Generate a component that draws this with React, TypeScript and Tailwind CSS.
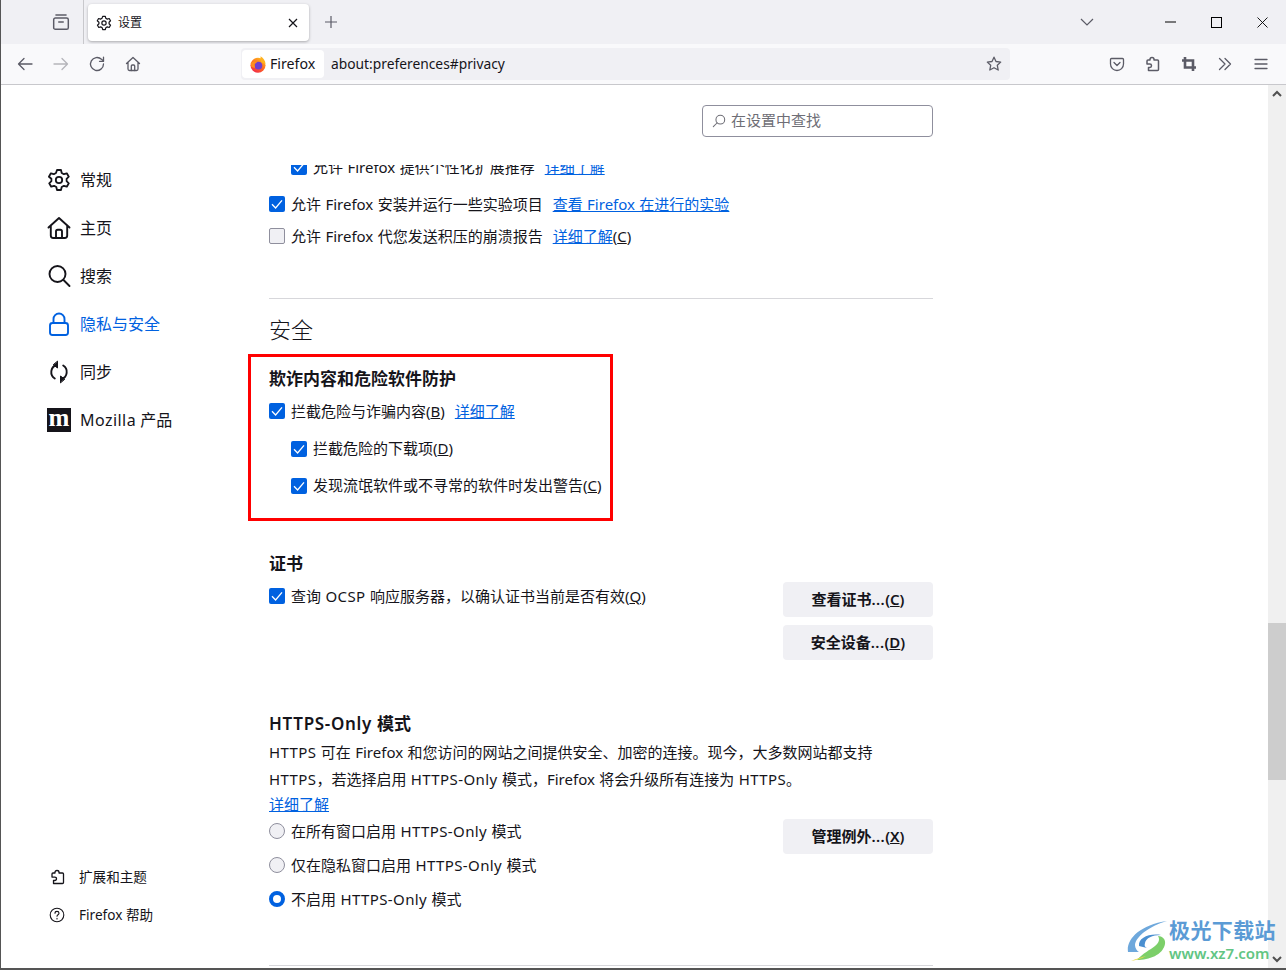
import React from "react";

const FONT = "font-['Noto_Sans','Noto_Sans_CJK_SC',sans-serif]";

function Check({ checked = true }: { checked?: boolean }) {
  if (!checked)
    return <span className="w-[16px] h-[16px] rounded-[2px] border border-[#8f8f9d] bg-[#f0f0f4] shrink-0" />;
  return (
    <span className="w-[16px] h-[16px] rounded-[2px] bg-[#0061e0] shrink-0 flex items-center justify-center">
      <svg width="14" height="14" viewBox="0 0 14 14" fill="none">
        <path d="M2 7.200 L5.600 11 L12 3.400" stroke="#fff" strokeWidth="1.300" />
      </svg>
    </span>
  );
}

function Radio({ checked = false }: { checked?: boolean }) {
  if (checked)
    return <span className="w-[16px] h-[16px] rounded-full border-[4px] border-[#0061e0] bg-white shrink-0" />;
  return <span className="w-[16px] h-[16px] rounded-full border border-[#8f8f9d] bg-[#f0f0f4] shrink-0" />;
}

function A({ children }: { children: React.ReactNode }) {
  return <span className="text-[#0061e0] underline">{children}</span>;
}

function U({ children }: { children: React.ReactNode }) {
  return <span className="underline">{children}</span>;
}

function L({ children }: { children: React.ReactNode }) {
  return <span className="tracking-[0.4px]">{children}</span>;
}

function Btn({ children, className = "" }: { children: React.ReactNode; className?: string }) {
  return (
    <div className={`w-[150px] h-[35px] rounded-[4px] bg-[#f0f0f4] flex items-center justify-center text-[15px] font-semibold text-[#15141a] ${className}`}>
      {children}
    </div>
  );
}

function Row({ children, h, indent }: { children: React.ReactNode; h: string; indent?: boolean }) {
  return <div className={`flex items-center gap-[6px] ${h} ${indent ? "pl-[22px]" : ""}`}>{children}</div>;
}

const stroke = { fill: "none", stroke: "currentColor", strokeWidth: 1.3, strokeLinecap: "round", strokeLinejoin: "round" } as const;

function Gear({ size }: { size: number }) {
  return (
    <svg width={size} height={size} viewBox="0 0 24 24" {...stroke} strokeWidth={1.800}>
      <circle cx="12" cy="12" r="3.200" />
      <path d="M10 2h4l.7 3 2.200 1.200 2.900-.9 2 3.400-2.200 2.100v2.400l2.200 2.100-2 3.400-2.900-.9-2.200 1.200-.7 3h-4l-.7-3-2.200-1.200-2.900.9-2-3.400 2.200-2.100v-2.400L1.900 8.700l2-3.400 2.900.9L9 5z" />
    </svg>
  );
}

function Puzzle({ size, w = 1.500 }: { size: number; w?: number }) {
  return (
    <svg width={size} height={size} viewBox="0 0 16 16" {...stroke} strokeWidth={w}>
      <path d="M7 1.500c1.300 0 2 .8 2 1.800v.7h3.500c.6 0 1 .4 1 1v8.500c0 .6-.4 1-1 1H3.500v-3h1.300c1 0 1.700-.7 1.700-1.700S5.800 8.100 4.800 8.100H2V5c0-.6.4-1 1-1h2v-.7c0-1 .7-1.800 2-1.800z" />
    </svg>
  );
}

function FirefoxLogo() {
  return (
    <svg width="16" height="17" viewBox="0 0 16 17" className="shrink-0">
      <defs>
        <linearGradient id="ff" x1="0.8" y1="0" x2="0.2" y2="1">
          <stop offset="0" stopColor="#ffc11f" />
          <stop offset="0.5" stopColor="#ff6b1f" />
          <stop offset="1" stopColor="#f0254f" />
        </linearGradient>
      </defs>
      <circle cx="8" cy="9.300" r="7.500" fill="url(#ff)" />
      <path d="M10.500 0.300c3 2 5 4.500 5 8L11 6z" fill="#ffb21f" />
      <circle cx="8.400" cy="9.600" r="3.900" fill="#6f3fd0" />
      <path d="M.6 7C3 5 5 5 7 6.500L4.500 8 5 12 1.500 11z" fill="#ff8f1f" />
    </svg>
  );
}

function NavItem({ icon, label, active }: { icon: React.ReactNode; label: React.ReactNode; active?: boolean }) {
  return (
    <div className={`h-[48px] flex items-center text-[16px] ${active ? "text-[#0061e0]" : "text-[#15141a]"}`}>
      <span className="w-[33px] shrink-0 flex items-center">{icon}</span>
      <span>{label}</span>
    </div>
  );
}

export default function App() {
  return (
    <div className={`${FONT} w-[1286px] h-[970px] flex flex-col overflow-hidden bg-white text-[#15141a] border-l border-[#555] border-b-2 border-b-[#555] relative`}>
      {/* Tab strip */}
      <div className="h-[44px] bg-[#f0f0f4] flex items-center shrink-0">
        <div className="w-[83px] h-full border-r border-[#c8c8cc] flex items-center justify-end pr-[13px] text-[#5b5b66]">
          <svg width="18" height="18" viewBox="0 0 16 16" {...stroke}>
            <rect x="1.500" y="4.500" width="13" height="10" rx="1.500" />
            <path d="M3.500 1.800h9M6 8h4" />
          </svg>
        </div>
        <div className="ml-[4px] w-[221px] h-[37px] mt-[1px] bg-white rounded-[4px] shadow-[0_1px_3px_rgba(0,0,0,0.3)] flex items-center pl-[8px] pr-[11px] text-[#15141a]">
          <Gear size={16} />
          <span className="ml-[6px] text-[12px] flex-1">设置</span>
          <svg width="10" height="10" viewBox="0 0 10 10" stroke="#15141a" strokeWidth="1.200"><path d="M1 1l8 8M9 1l-8 8" /></svg>
        </div>
        <div className="ml-[15px] text-[#5b5b66]">
          <svg width="14" height="14" viewBox="0 0 14 14" stroke="currentColor" strokeWidth="1.200"><path d="M7 1v12M1 7h12" /></svg>
        </div>
        <div className="flex-1" />
        <div className="flex items-center text-[#15141a]">
          <svg className="mr-[71px]" width="14" height="8" viewBox="0 0 14 8" fill="none" stroke="#5b5b66" strokeWidth="1.200"><path d="M1 1l6 6 6-6" /></svg>
          <svg className="mr-[35px]" width="11" height="2" viewBox="0 0 11 2" stroke="#000" strokeWidth="1"><path d="M0 1h11" /></svg>
          <svg className="mr-[35px]" width="11" height="11" viewBox="0 0 11 11" fill="none" stroke="#000" strokeWidth="1"><rect x="0.500" y="0.500" width="10" height="10" /></svg>
          <svg className="mr-[18px]" width="11" height="11" viewBox="0 0 11 11" stroke="#000" strokeWidth="0.900"><path d="M0.500 0.500l10 10M10.500 0.500l-10 10" /></svg>
        </div>
      </div>

      {/* Nav bar */}
      <div className="h-[41px] bg-[#f9f9fb] border-b border-[#c8c8cc] flex items-center shrink-0 text-[#5b5b66]">
        <div className="ml-[16px] w-[36px]">
          <svg width="16" height="16" viewBox="0 0 16 16" {...stroke}><path d="M15 8H1.500M7 2.500 1.500 8 7 13.500" /></svg>
        </div>
        <div className="w-[36px] text-[#b5b5ba]">
          <svg width="16" height="16" viewBox="0 0 16 16" {...stroke}><path d="M1 8h13.500M9 2.500 14.500 8 9 13.500" /></svg>
        </div>
        <div className="w-[36px]">
          <svg width="16" height="16" viewBox="0 0 16 16" {...stroke}>
            <path d="M14.500 8a6.500 6.500 0 1 1-2-4.700L14.500 5" />
            <path d="M14.500 1.200V5.300h-4" />
          </svg>
        </div>
        <div className="w-[40px]">
          <svg width="16" height="16" viewBox="0 0 16 16" {...stroke}>
            <path d="M1.500 7.500 8 1.500l6.500 6M3 6.500V13c0 .8.500 1.500 1.500 1.500h7c1 0 1.500-.7 1.500-1.500V6.500" />
            <path d="M6.300 14.500V10c0-.6.400-1 1-1h1.400c.6 0 1 .4 1 1v4.500" />
          </svg>
        </div>
        <div className="ml-[76px] w-[769px] h-[32px] bg-[#f0f0f4] rounded-[4px] flex items-center text-[#15141a] text-[14.200px]">
          <div className="w-[82px] h-[28px] ml-[1px] bg-white rounded-[4px] flex items-center pl-[8px] gap-[4px]">
            <FirefoxLogo />
            <span>Firefox</span>
          </div>
          <span className="ml-[7px] flex-1 text-[13.800px]">about:preferences#privacy</span>
          <svg className="mr-[8px] text-[#5b5b66]" width="16" height="16" viewBox="0 0 16 16" {...stroke}>
            <path d="M8 1.200l2 4.300 4.700.6-3.400 3.200.9 4.700L8 11.700 3.800 14l.9-4.700L1.300 6.100 6 5.500z" />
          </svg>
        </div>
        <div className="flex-1" />
        <div className="flex items-center gap-[20px] pr-[17px]">
          <svg width="16" height="16" viewBox="0 0 16 16" {...stroke}>
            <path d="M2.500 2.500h11c.6 0 1 .4 1 1V8a6.500 6.500 0 0 1-13 0V3.500c0-.6.400-1 1-1z" />
            <path d="M5 6.500 8 9.500l3-3" />
          </svg>
          <Puzzle size={16} />
          <svg width="16" height="16" viewBox="0 0 16 16" fill="none" stroke="currentColor" strokeWidth="2.600"><path d="M4 1v10.500h11M1 4.500h11V15" /></svg>
          <svg width="16" height="16" viewBox="0 0 16 16" {...stroke}><path d="M2.500 2.500 8 8l-5.500 5.500M8 2.500 13.500 8 8 13.500" /></svg>
          <svg width="16" height="16" viewBox="0 0 16 16" {...stroke}><path d="M2 3.500h12M2 8h12M2 12.500h12" /></svg>
        </div>
      </div>

      {/* Body */}
      <div className="flex-1 flex min-h-0">
        {/* Sidebar */}
        <div className="w-[268px] shrink-0 pl-[46px] pt-[71px] flex flex-col">
          <NavItem label="常规" icon={<Gear size={24} />} />
          <NavItem
            label="主页"
            icon={
              <svg width="24" height="24" viewBox="0 0 24 24" {...stroke} strokeWidth={1.900}>
                <path d="M1.500 11.500 12 2l10.500 9.500M3.800 10v9.500c0 1.500 1 2.500 2.500 2.500h11.400c1.500 0 2.500-1 2.500-2.500V10" />
                <path d="M9 22v-6.500c0-1 .7-1.700 1.700-1.700h2.600c1 0 1.700.7 1.700 1.700V22" />
              </svg>
            }
          />
          <NavItem
            label="搜索"
            icon={
              <svg width="24" height="24" viewBox="0 0 24 24" {...stroke} strokeWidth={1.900}>
                <circle cx="10.500" cy="10" r="8" />
                <path d="M16.500 16 22.500 22" />
              </svg>
            }
          />
          <NavItem
            active
            label="隐私与安全"
            icon={
              <svg width="24" height="24" viewBox="0 0 24 24" {...stroke} strokeWidth={1.900}>
                <rect x="3" y="11" width="18" height="12" rx="2.500" />
                <path d="M6.500 11V7a5.500 5.500 0 0 1 11 0v4" />
              </svg>
            }
          />
          <NavItem
            label="同步"
            icon={
              <svg width="24" height="24" viewBox="0 0 24 24" {...stroke} strokeWidth={1.900}>
                <path d="M7.800 18.500A7.500 7.500 0 0 1 9.500 5M16.200 5.500A7.500 7.500 0 0 1 14.500 19" />
                <path d="M10.500 1.500v6.500L6.500 5z M13.500 22.500V16l4 3z" fill="currentColor" strokeWidth={1} />
              </svg>
            }
          />
          <NavItem
            label={<span><span className="tracking-[0.45px]">Mozilla</span> 产品</span>}
            icon={
              <span className="w-[24px] h-[24px] bg-[#15141a] text-white flex items-center justify-center font-['Liberation_Serif',serif] font-bold text-[25px] leading-none pb-[5px]">
                m
              </span>
            }
          />
          <div className="flex-1" />
          <div className="h-[38px] flex items-center text-[13.600px]">
            <span className="w-[32px] pl-[3px] text-[#15141a]"><Puzzle size={16} w={1.300} /></span>
            <span>扩展和主题</span>
          </div>
          <div className="h-[38px] flex items-center text-[13.600px] mb-[34px]">
            <span className="w-[32px] pl-[2px] text-[#15141a]">
              <svg width="16" height="16" viewBox="0 0 16 16" {...stroke} strokeWidth={1.100}>
                <circle cx="8" cy="8" r="6.800" />
                <path d="M6 6.300c0-1.200 1-1.900 2-1.900s2 .7 2 1.800c0 1.500-2 1.500-2 3" />
                <path d="M8 11.300v.6" />
              </svg>
            </span>
            <span>Firefox 帮助</span>
          </div>
        </div>

        {/* Main */}
        <div className="w-[664px] shrink-0 text-[15px] [word-spacing:0.5px]">
          <div className="h-[80px] flex justify-end items-start pt-[20px]">
            <div className="w-[231px] h-[32px] border border-[#8f8f9d] rounded-[4px] flex items-center pl-[9px] pb-[2px] gap-[5px] text-[#6e6e76] text-[15px]">
              <svg className="mt-[2px]" width="14" height="14" viewBox="0 0 16 16" {...stroke} strokeWidth={1.200}>
                <circle cx="9.500" cy="6.500" r="5" />
                <path d="M6 10 1.500 14.500" />
              </svg>
              <span>在设置中查找</span>
            </div>
          </div>
          <div className="h-[11px] overflow-hidden flex items-end">
            <Row indent h="h-[18px] shrink-0">
              <Check />
              <span>允许 Firefox 提供个性化扩展推荐</span>
              <span className="ml-[4px]"><A>详细了解</A></span>
            </Row>
          </div>
          <Row h="h-[28px] mt-[14px]">
            <Check />
            <span>允许 Firefox 安装并运行一些实验项目</span>
            <span className="ml-[4px]"><A>查看 Firefox 在进行的实验</A></span>
          </Row>
          <Row h="h-[36px]">
            <Check checked={false} />
            <span>允许 Firefox 代您发送积压的崩溃报告</span>
            <span className="ml-[4px]"><A>详细了解</A>(<U>C</U>)</span>
          </Row>
          <div className="h-px bg-[#d7d7db] mt-[44px]" />
          <div className="h-[30px] mt-[15px] flex items-center text-[22px] font-light">安全</div>

          <div className="mt-[10px] ml-[-21px] w-[365px] h-[167px] border-[3px] border-[#ff0000] pl-[18px] pt-[10px]">
            <div className="h-[24px] flex items-center text-[17px] font-semibold">欺诈内容和危险软件防护</div>
            <Row h="h-[32px] mt-[4px]">
              <Check />
              <span>拦截危险与诈骗内容(<U>B</U>)</span>
              <span className="ml-[4px]"><A>详细了解</A></span>
            </Row>
            <Row indent h="h-[37px] mt-[3px]">
              <Check />
              <span>拦截危险的下载项(<U>D</U>)</span>
            </Row>
            <Row indent h="h-[37px]">
              <Check />
              <span>发现流氓软件或不寻常的软件时发出警告(<U>C</U>)</span>
            </Row>
          </div>

          <div className="h-[24px] mt-[31px] flex items-center text-[17px] font-semibold">证书</div>
          <div className="flex justify-between mt-[6px]">
            <Row h="h-[28px]">
              <Check />
              <span>查询 <L>OCSP</L> 响应服务器，以确认证书当前是否有效(<U>Q</U>)</span>
            </Row>
            <div className="flex flex-col gap-[8px]">
              <Btn><span>查看证书<L>...</L>(<U>C</U>)</span></Btn>
              <Btn><span>安全设备<L>...</L>(<U>D</U>)</span></Btn>
            </div>
          </div>

          <div className="h-[24px] mt-[52px] flex items-center text-[17px] font-semibold">
            <span><span className="tracking-[0.7px]">HTTPS-Only</span> 模式</span>
          </div>
          <div className="mt-[3px] leading-[27px]">
            <div><L>HTTPS</L> 可在 Firefox 和您访问的网站之间提供安全、加密的连接。现今，大多数网站都支持</div>
            <div><L>HTTPS</L>，若选择启用 <L>HTTPS-Only</L> 模式，Firefox 将会升级所有连接为 <L>HTTPS</L>。</div>
          </div>
          <div className="h-[24px] -mt-[1px] flex items-center"><A>详细了解</A></div>
          <div className="flex justify-between">
            <div>
              <Row h="h-[34px] mt-[-2px]">
                <Radio />
                <span>在所有窗口启用 <L>HTTPS-Only</L> 模式</span>
              </Row>
              <Row h="h-[34px]">
                <Radio />
                <span>仅在隐私窗口启用 <L>HTTPS-Only</L> 模式</span>
              </Row>
              <Row h="h-[34px]">
                <Radio checked />
                <span>不启用 <L>HTTPS-Only</L> 模式</span>
              </Row>
            </div>
            <Btn className="mt-[3px]"><span>管理例外<L>...</L>(<U>X</U>)</span></Btn>
          </div>
          <div className="h-px bg-[#d7d7db] mt-[49px]" />
        </div>

        <div className="flex-1" />

        {/* Scrollbar */}
        <div className="w-[18px] shrink-0 bg-[#f0f0f0] flex flex-col items-center relative">
          <svg className="mt-[5px] shrink-0" width="10" height="7" viewBox="0 0 10 7" fill="none" stroke="#505050" strokeWidth="2"><path d="M1 6l4-4 4 4" /></svg>
          <div className="mt-[526px] w-full h-[157px] bg-[#cdcdcd] shrink-0" />
          <div className="flex-1" />
          <svg className="mb-[5px] shrink-0" width="10" height="7" viewBox="0 0 10 7" fill="none" stroke="#505050" strokeWidth="2"><path d="M1 1l4 4 4-4" /></svg>
        </div>
      </div>

      {/* Watermark */}
      <div className="absolute left-[1126px] top-[917px] flex items-center">
        <svg width="46" height="44" viewBox="0 0 46 44" fill="none">
          <path d="M1 34C-1 22 12 7 40 3 23 8 9 18 8 27c0 3 2 6 4 7z" fill="#6ea8dc" />
          <path d="M12 28c-1-8 10-13 22-11-9 0-15 3-16 8-1 3 0 4 2 5z" fill="#4a8fd0" />
          <path d="M10 42c12 0 26-5 28-16 1-5-3-8-7-8 2 3 1 7-3 10-5 4-12 7-18 14z" fill="#7ccf6a" />
          <path d="M4 43c5-1 10-2 15-5-5 1-10 3-15 5z" fill="#e6d84a" />
        </svg>
        <div className="ml-[-4px]">
          <div className="text-[21px] leading-[27px] font-semibold text-[#5b9bd5] tracking-[0.4px]">极光下载站</div>
          <div className="text-[15px] leading-[18px] font-semibold text-[#62c583]">www.xz7.com</div>
        </div>
      </div>
    </div>
  );
}
